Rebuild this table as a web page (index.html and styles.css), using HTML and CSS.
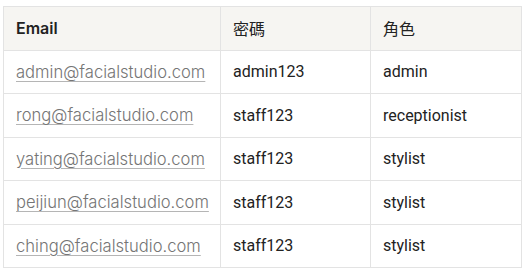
FILE: index.html
```html
<!DOCTYPE html>
<html>
<head>
<meta charset="utf-8">
<link rel="stylesheet" href="styles.css">
</head>
<body>
<table class="accounts">
  <colgroup><col class="c-email"><col class="c-pass"><col class="c-role"></colgroup>
  <thead>
    <tr><th class="col-email">Email</th><th>密碼</th><th>角色</th></tr>
  </thead>
  <tbody>
    <tr><td class="email"><a href="#">admin@facialstudio.com</a></td><td>admin123</td><td>admin</td></tr>
    <tr><td class="email"><a href="#">rong@facialstudio.com</a></td><td>staff123</td><td>receptionist</td></tr>
    <tr><td class="email"><a href="#">yating@facialstudio.com</a></td><td>staff123</td><td>stylist</td></tr>
    <tr><td class="email"><a href="#">peijiun@facialstudio.com</a></td><td>staff123</td><td>stylist</td></tr>
    <tr><td class="email"><a href="#">ching@facialstudio.com</a></td><td>staff123</td><td>stylist</td></tr>
  </tbody>
</table>
</body>
</html>
```
FILE: styles.css
```css
html, body { margin: 0; padding: 0; background: #fff; }
body { padding: 6px 4px 0 3px; }
.accounts {
  border-collapse: collapse;
  table-layout: fixed;
  width: 518px;
  font-family: Roboto, "Noto Sans CJK TC", sans-serif;
  font-size: 16px;
  color: #222;
}
.c-email { width: 217px; }
.c-pass { width: 150px; }
.c-role { width: 151px; }
.accounts th, .accounts td {
  border: 1px solid #e3e3e3;
  padding: 0 12px;
  height: 42.5px;
  text-align: left;
  vertical-align: middle;
  white-space: nowrap;
}
.accounts th {
  background: #f6f5f2;
  font-weight: 400;
}
.accounts th.col-email {
  font-family: Inter, "Noto Sans", sans-serif;
  font-weight: 600;
}
.email a {
  font-family: Inter, "Noto Sans", sans-serif;
  font-size: 16.6px;
  font-weight: 300;
  color: #757575;
  text-decoration: underline;
  text-decoration-color: #b5b5b5;
  text-underline-offset: 3px;
}
```
